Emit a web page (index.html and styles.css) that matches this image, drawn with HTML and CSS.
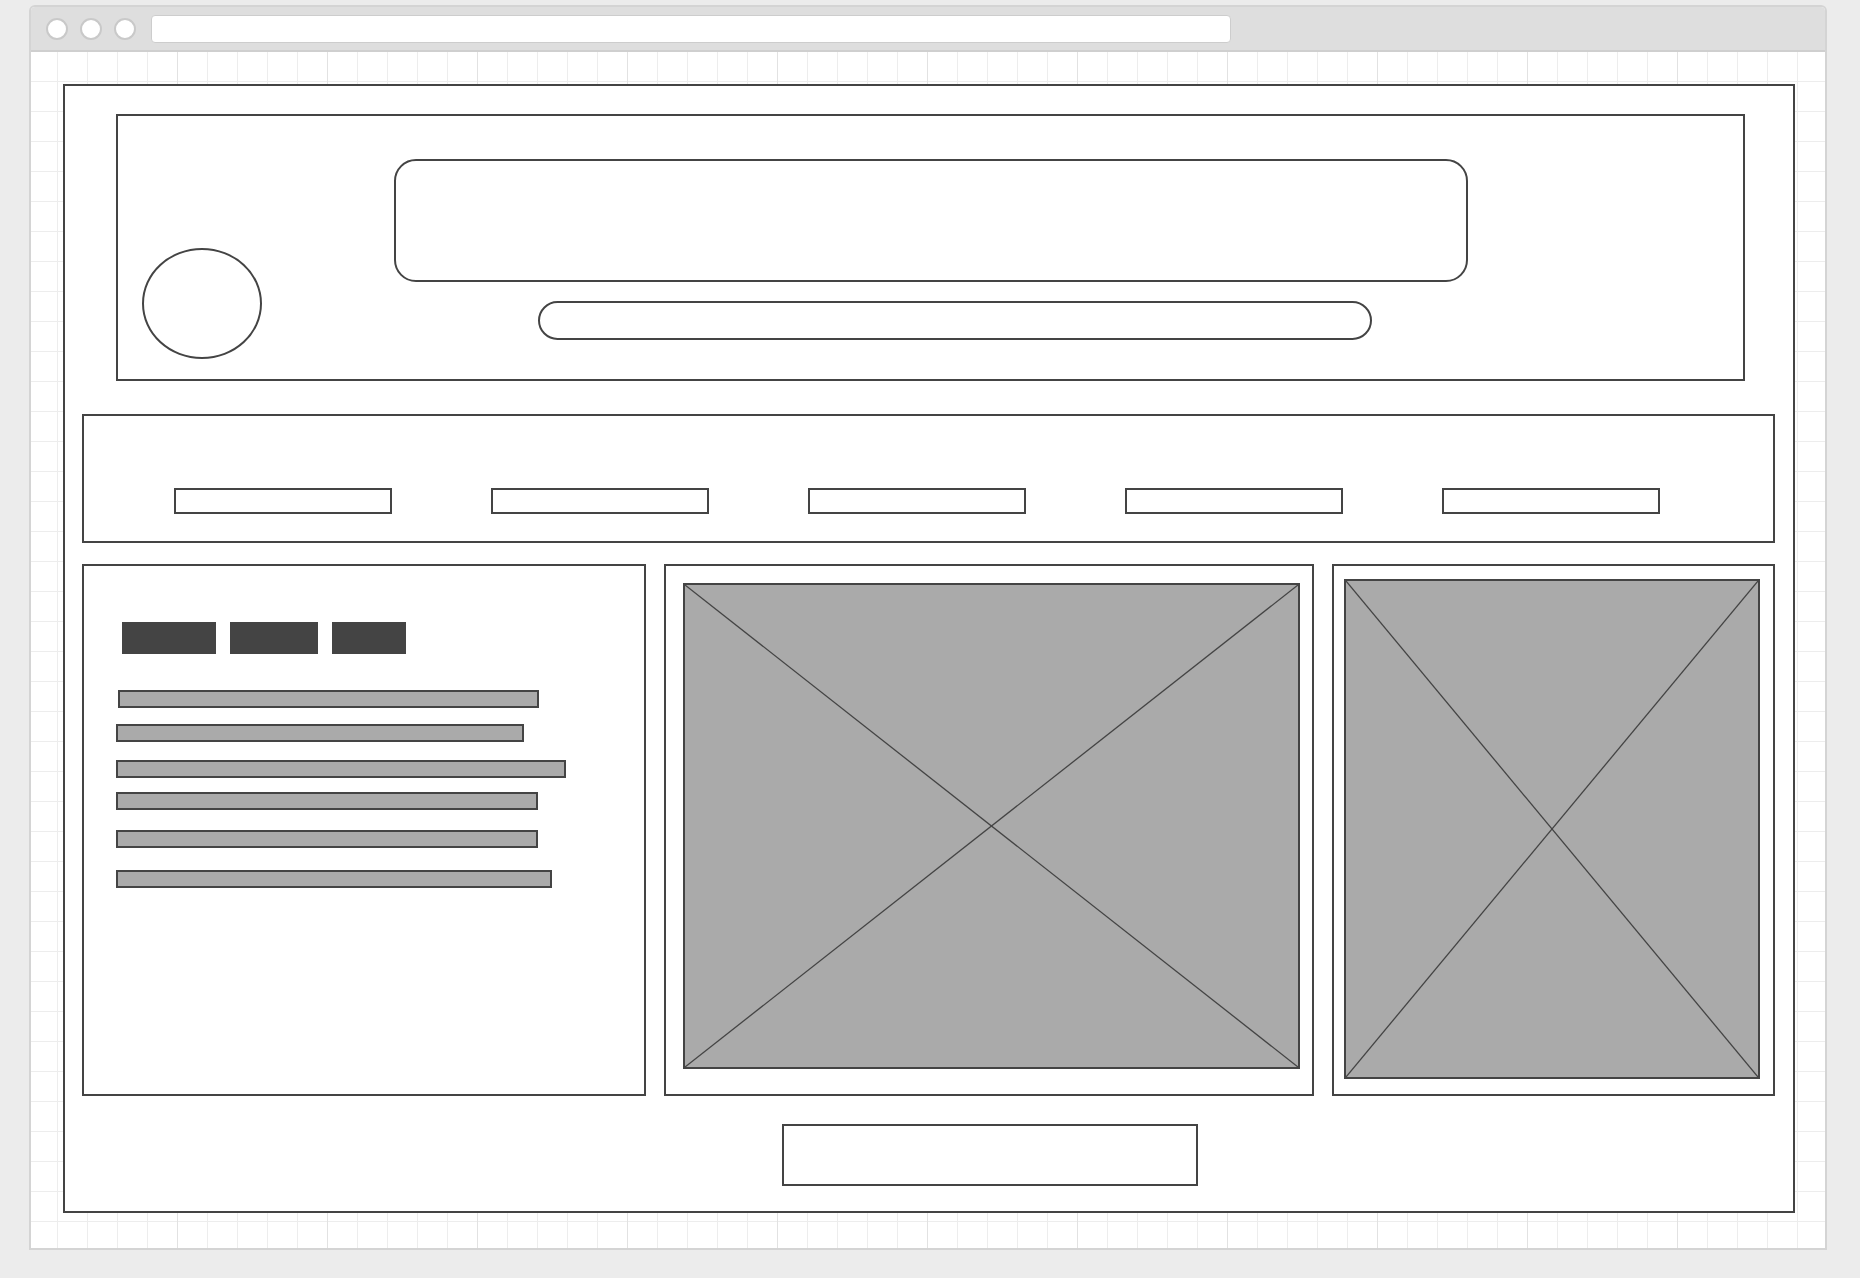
FILE: index.html
```html
<!DOCTYPE html>
<html lang="en">
<head>
  <meta charset="UTF-8" />
  <title>Wireframe</title>
  <meta name="viewport" content="width=device-width, initial-scale=1" />
  <link rel="stylesheet" href="styles.css">
</head>
<body>

  <div class="browser">
    <div class="chrome">
      <span class="dot"></span>
      <span class="dot"></span>
      <span class="dot"></span>
      <div class="address"></div>
    </div>

    <div class="canvas">
      <div class="page">

        <header class="hero">
          <div class="avatar"></div>
          <div class="hero-main">
            <div class="banner"></div>
            <div class="search"></div>
          </div>
        </header>

        <nav class="menu">
          <a class="menu-item"></a>
          <a class="menu-item"></a>
          <a class="menu-item"></a>
          <a class="menu-item"></a>
          <a class="menu-item"></a>
        </nav>

        <section class="columns">
          <div class="panel text-panel">
            <div class="tags">
              <span class="tag" style="width:94px"></span>
              <span class="tag" style="width:88px"></span>
              <span class="tag" style="width:74px"></span>
            </div>
            <div class="line" style="width:421px"></div>
            <div class="line" style="width:408px"></div>
            <div class="line" style="width:450px"></div>
            <div class="line" style="width:422px"></div>
            <div class="line" style="width:422px"></div>
            <div class="line" style="width:436px"></div>
          </div>

          <div class="panel media-panel">
            <svg class="placeholder wide" viewBox="0 0 100 100" preserveAspectRatio="none">
              <line x1="0" y1="0" x2="100" y2="100" />
              <line x1="100" y1="0" x2="0" y2="100" />
            </svg>
          </div>

          <div class="panel media-panel side">
            <svg class="placeholder tall" viewBox="0 0 100 100" preserveAspectRatio="none">
              <line x1="0" y1="0" x2="100" y2="100" />
              <line x1="100" y1="0" x2="0" y2="100" />
            </svg>
          </div>
        </section>

        <div class="action"></div>

      </div>
    </div>
  </div>

</body>
</html>
```

FILE: styles.css
```css
* {
  box-sizing: border-box;
}
body {
  margin: 0;
  padding: 5px 0 0 29px;
  background: #ececec;
  font-family: "Liberation Sans", Arial, sans-serif;
}

/* browser frame */
.browser {
  width: 1798px;
  height: 1245px;
  display: flex;
  flex-direction: column;
  border: 2px solid #d4d4d4;
  border-radius: 6px 6px 0 0;
  background: #fff;
  overflow: hidden;
}
.chrome {
  height: 45px;
  flex: none;
  display: flex;
  align-items: center;
  gap: 12px;
  padding-left: 15px;
  background: #dedede;
  border-bottom: 2px solid #cfcfcf;
}
.dot {
  width: 22px;
  height: 22px;
  flex: none;
  border-radius: 50%;
  background: #fff;
  border: 2px solid #c9c9c9;
}
.address {
  width: 1080px;
  height: 28px;
  margin-left: 3px;
  background: #fff;
  border: 1px solid #cdcdcd;
  border-radius: 4px;
}
.canvas {
  flex: 1;
  padding: 32px 0 0 32px;
  background-color: #fff;
  background-image:
    linear-gradient(to right, #e2e2e2 0 1px, transparent 1px),
    linear-gradient(to right, #ededed 0 1px, transparent 1px),
    linear-gradient(to bottom, #ededed 0 1px, transparent 1px);
  background-size: 150px 100%, 30px 30px, 30px 30px;
  background-position: 146px 0, 26px 29px, 26px 29px;
}

/* wireframe page */
.page {
  width: 1732px;
  height: 1129px;
  padding: 28px 0 0 17px;
  background: #fff;
  border: 2px solid #444;
}
.hero {
  width: 1629px;
  height: 267px;
  margin-left: 34px;
  display: flex;
  align-items: flex-start;
  border: 2px solid #444;
}
.avatar {
  width: 120px;
  height: 111px;
  margin: 132px 0 0 24px;
  border: 2px solid #444;
  border-radius: 50%;
}
.hero-main {
  margin: 43px 0 0 132px;
  display: flex;
  flex-direction: column;
  align-items: flex-start;
}
.banner {
  width: 1074px;
  height: 123px;
  border: 2px solid #444;
  border-radius: 22px;
}
.search {
  width: 834px;
  height: 39px;
  margin: 19px 0 0 144px;
  border: 2px solid #444;
  border-radius: 20px;
}

.menu {
  width: 1693px;
  height: 129px;
  margin-top: 33px;
  padding: 72px 0 0 90px;
  display: flex;
  align-items: flex-start;
  gap: 99px;
  border: 2px solid #444;
}
.menu-item {
  width: 218px;
  height: 26px;
  border: 2px solid #444;
}

.columns {
  margin-top: 21px;
  height: 532px;
  display: grid;
  grid-template-columns: 564px 650px 443px;
  column-gap: 18px;
  width: 1693px;
}
.panel {
  border: 2px solid #444;
}
.text-panel {
  padding: 56px 0 0 32px;
}
.tags {
  display: flex;
  gap: 14px;
  margin-left: 6px;
}
.tag {
  height: 32px;
  background: #444;
}
.line {
  height: 18px;
  background: #aaa;
  border: 2px solid #444;
}
.line:nth-child(2) { margin: 36px 0 0 2px; }
.line:nth-child(3) { margin-top: 16px; }
.line:nth-child(4) { margin-top: 18px; }
.line:nth-child(5) { margin-top: 14px; }
.line:nth-child(6) { margin-top: 20px; }
.line:nth-child(7) { margin-top: 22px; }

.media-panel {
  padding: 17px;
}
.media-panel.side {
  padding: 13px 0 0 10px;
}
.placeholder {
  display: block;
  background: #aaa;
  border: 2px solid #444;
}
.placeholder line {
  stroke: #444;
  stroke-width: 1.3;
  vector-effect: non-scaling-stroke;
}
.placeholder.wide {
  width: 617px;
  height: 486px;
}
.placeholder.tall {
  width: 416px;
  height: 500px;
}

.action {
  width: 416px;
  height: 62px;
  margin: 28px 0 0 700px;
  border: 2px solid #444;
}
```
